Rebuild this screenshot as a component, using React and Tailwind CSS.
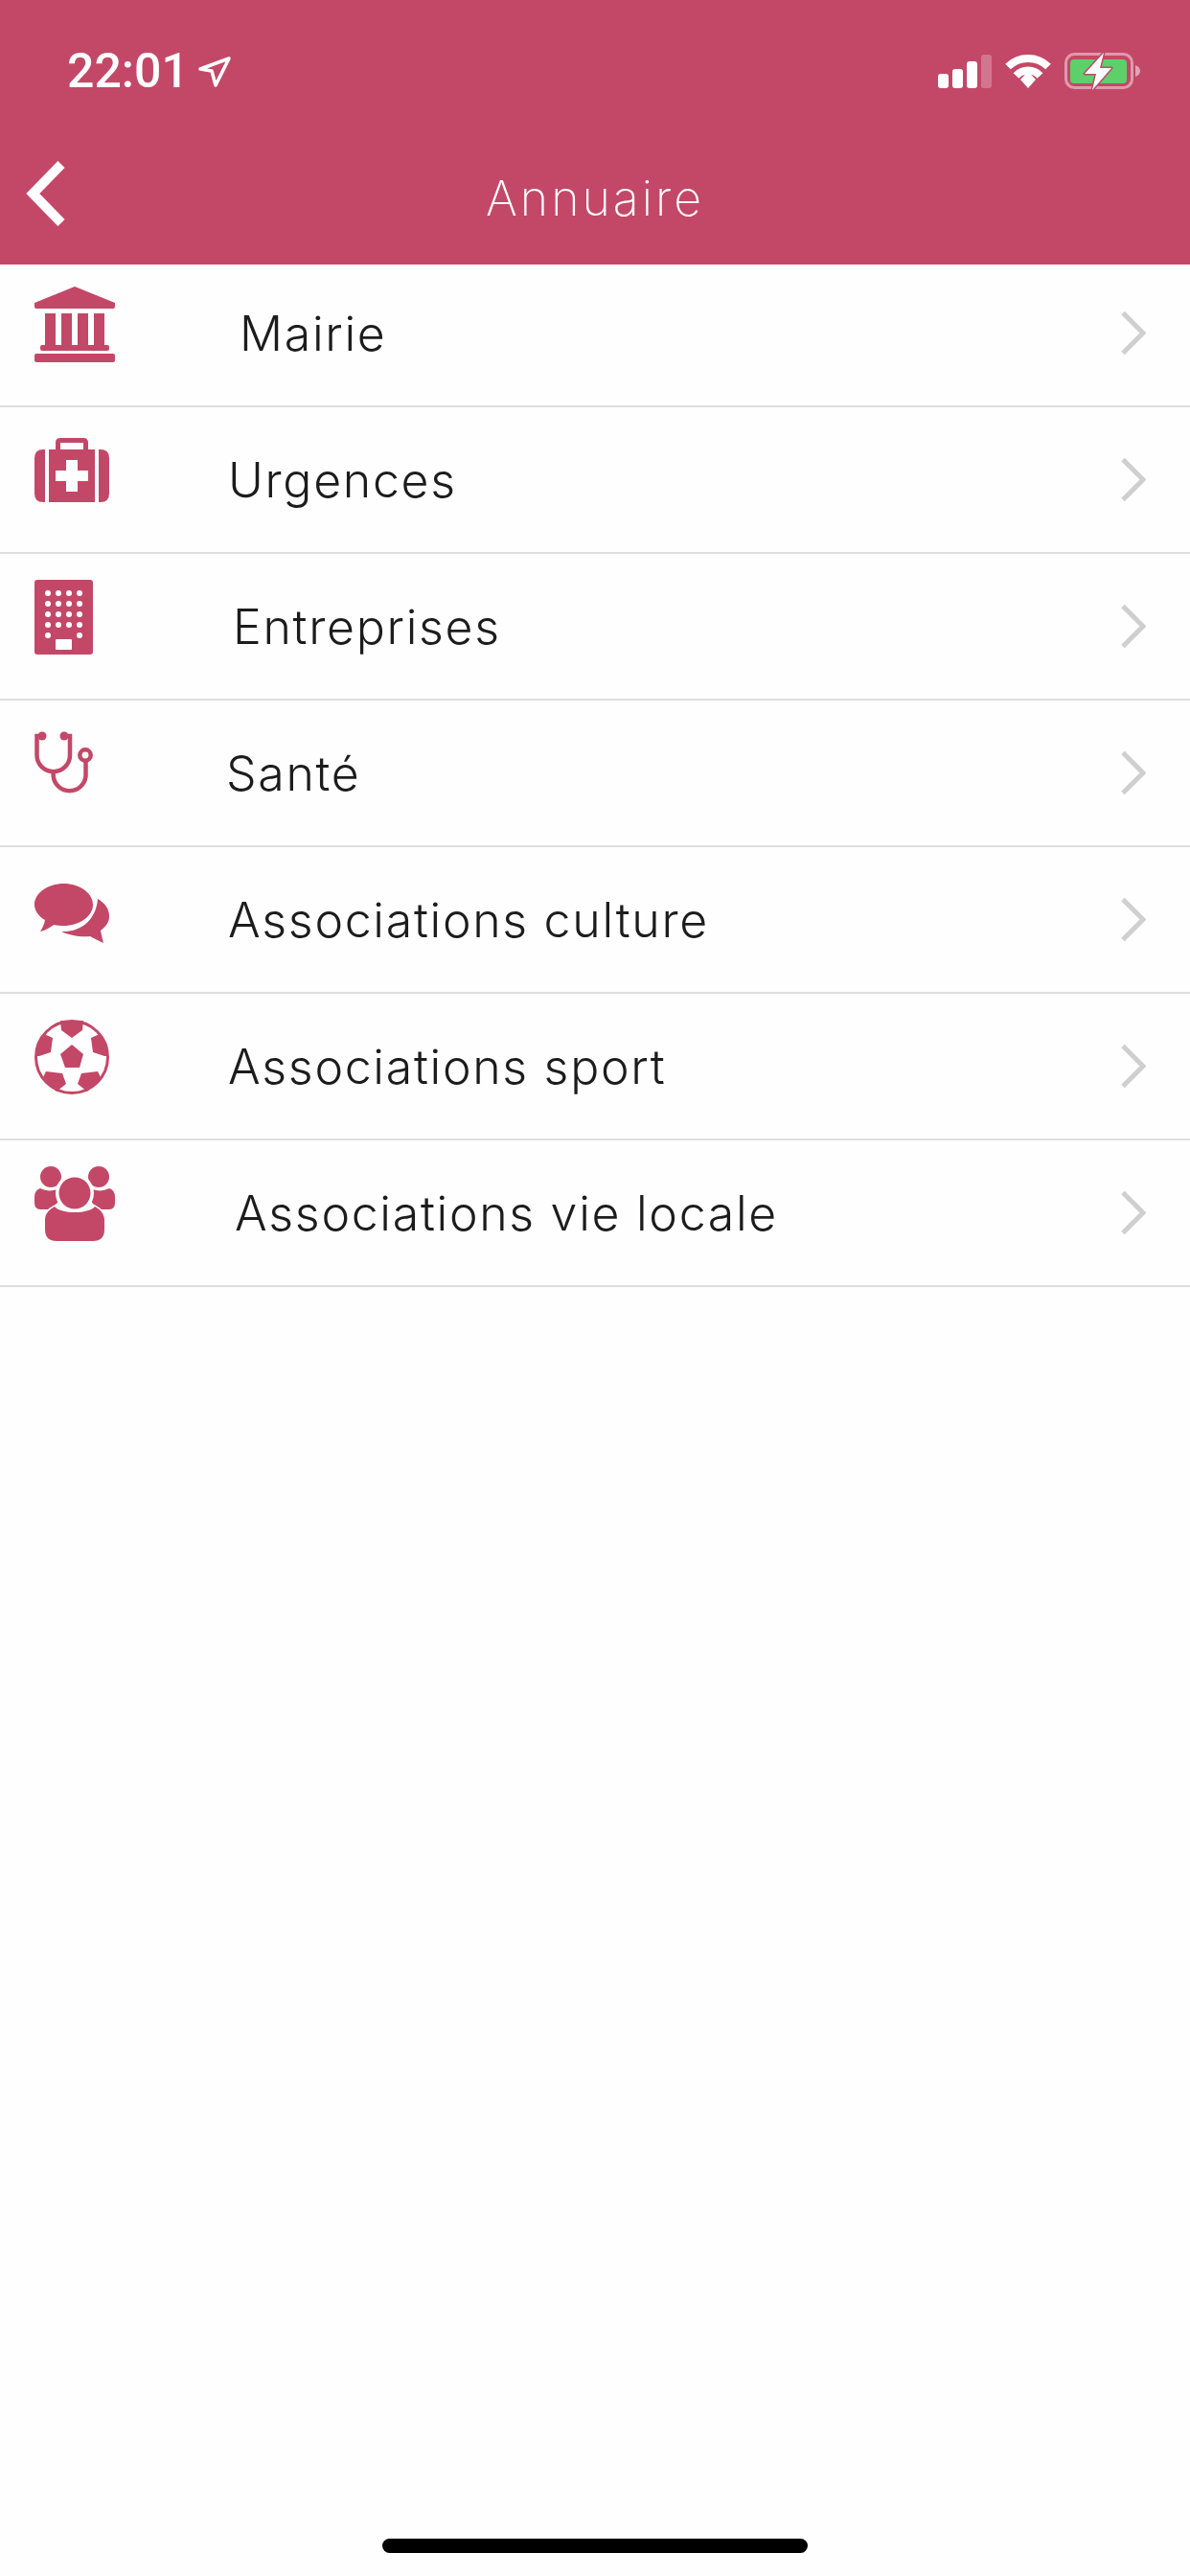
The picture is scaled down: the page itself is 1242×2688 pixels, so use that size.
import React from "react";

const rows = [
  { label: "Mairie", icon: <CityHallIcon />, rowCls: "h-[149px]", iconCls: "mt-[23px] h-[79px]", textCls: "ml-[130px] -mt-[3px]", arrowCls: "-mt-[5px]" },
  { label: "Urgences", icon: <KitIcon />, rowCls: "h-[153px]", iconCls: "mt-[32px] h-[68px]", textCls: "ml-[118px] mt-[2px]", arrowCls: "" },
  { label: "Entreprises", icon: <BuildingIcon />, rowCls: "h-[153px]", iconCls: "mt-[27px] h-[78px]", textCls: "ml-[123px] mt-[2px]", arrowCls: "" },
  { label: "Santé", icon: <StethoscopeIcon />, rowCls: "h-[153px]", iconCls: "mt-[32px] h-[67px]", textCls: "ml-[116px] mt-[2px]", arrowCls: "" },
  { label: "Associations culture", icon: <ChatIcon />, rowCls: "h-[153px]", iconCls: "mt-[38px] h-[62px]", textCls: "ml-[118px] mt-[2px]", arrowCls: "" },
  { label: "Associations sport", icon: <BallIcon />, rowCls: "h-[153px]", iconCls: "mt-[27px] h-[78px]", textCls: "ml-[118px] mt-[2px]", arrowCls: "" },
  { label: "Associations vie locale", icon: <PeopleIcon />, rowCls: "h-[153px]", iconCls: "mt-[27px] h-[78px]", textCls: "ml-[125px] mt-[2px]", arrowCls: "" },
];

export default function App() {
  return (
    <div className="flex flex-col min-h-[2688px] bg-[#fefefe] font-['Inter',sans-serif]">
      <header className="h-[276px] bg-[#c34868] text-white shrink-0">
        {/* Status bar */}
        <div className="flex items-start h-[135px] pl-[70px] pt-[44px]">
          <span className="text-[50px] leading-[60px] font-medium font-['Roboto',sans-serif]">22:01</span>
          <ArrowIcon />
          <div className="flex items-start ml-auto mr-[51px] mt-[11px]">
            <SignalIcon />
            <WifiIcon />
            <BatteryIcon />
          </div>
        </div>
        {/* Title */}
        <div className="relative flex justify-center items-center h-[141px] pt-[3px]">
          <BackIcon />
          <h1 className="text-[50px] font-extralight tracking-[3px]">Annuaire</h1>
        </div>
      </header>

      <ul>
        {rows.map((row) => (
          <li key={row.label} className={`flex ${row.rowCls} pl-9 pr-[46px] border-b-2 border-[#dedede]`}>
            <div className={`w-[84px] shrink-0 ${row.iconCls}`}>{row.icon}</div>
            <span className={`${row.textCls} self-center text-[50px] font-light text-[#1c1c1c] tracking-[1.7px]`}>
              {row.label}
            </span>
            <svg viewBox="0 0 26 45" className={`ml-auto self-center w-[26px] h-[45px] ${row.arrowCls}`} fill="none" stroke="#cfcfcf" strokeWidth="5">
              <polyline points="2,1.5 23,22.5 2,43.5" />
            </svg>
          </li>
        ))}
      </ul>

      <div className="mt-auto mb-[24px] mx-auto w-[444px] h-[15px] rounded-full bg-black" />
    </div>
  );
}

function ArrowIcon() {
  return (
    <svg viewBox="0 0 34 32" className="w-[34px] h-[32px] ml-[10px] mt-[15px]" fill="none" stroke="#fff" strokeWidth="3.5" strokeLinejoin="round">
      <path d="M2 13 L32 2 L18 30 L14 15 Z" />
    </svg>
  );
}

function SignalIcon() {
  return (
    <svg viewBox="0 0 56 36" className="w-[56px] h-[36px] mt-[2px]" fill="#fff">
      <rect x="0" y="20" width="11" height="15" rx="3" />
      <rect x="15" y="15" width="11" height="20" rx="3" />
      <rect x="30" y="7" width="11" height="28" rx="3" />
      <rect x="45" y="0" width="11" height="35" rx="3" opacity="0.25" />
    </svg>
  );
}

function WifiIcon() {
  return (
    <svg viewBox="0 0 48 36" className="w-[48px] h-[36px] ml-[14px] mt-[1px]" fill="none" stroke="#fff">
      <path d="M3 13.5 A30 30 0 0 1 45 13.5" strokeWidth="8" />
      <path d="M11.5 23 A17 17 0 0 1 36.5 23" strokeWidth="8" />
      <path d="M16 27 L24 18.5 L32 27 L24 36 Z" fill="#fff" stroke="none" />
    </svg>
  );
}

function BatteryIcon() {
  return (
    <svg viewBox="0 0 80 40" className="w-[80px] h-[40px] ml-[14px]">
      <rect x="1.5" y="1.5" width="69" height="35" rx="9" fill="none" stroke="#fff" strokeOpacity="0.45" strokeWidth="3" />
      <path d="M74 13 Q79 15 79 19 Q79 23 74 25 Z" fill="#fff" fillOpacity="0.5" />
      <rect x="6" y="7" width="59" height="25" rx="4" fill="#5dd06a" />
      <path d="M41 0 L21 22 L33 22 L29 39 L49 16 L37 16 Z" fill="#fff" stroke="#c34868" strokeWidth="3" strokeLinejoin="round" paintOrder="stroke" />
    </svg>
  );
}

function BackIcon() {
  return (
    <svg viewBox="0 0 41 68" className="absolute left-[27px] top-[33px] w-[41px] h-[68px]" fill="none" stroke="#fff" strokeWidth="10">
      <polyline points="37,3.5 7.3,34 37,64.5" />
    </svg>
  );
}

function CityHallIcon() {
  return (
    <svg viewBox="0 0 84 79" className="w-[84px] h-[79px]" fill="#c34868">
      <path d="M42 0 L84 17 V21 Q84 23 82 23 H2 Q0 23 0 21 V17 Z" />
      <path d="M11 28 H22 V62 H11 Z M28 28 H39 V62 H28 Z M45 28 H56 V62 H45 Z M62 28 H73 V62 H62 Z" />
      <rect x="6" y="61" width="72" height="6" rx="2" />
      <rect x="0" y="70" width="84" height="9" rx="2" />
    </svg>
  );
}

function KitIcon() {
  return (
    <svg viewBox="0 0 78 68" className="w-[78px] h-[68px]" fill="#c34868">
      <path d="M11 12 V67 H9 Q0 67 0 58 V21 Q0 12 9 12 Z" />
      <path d="M67 12 V67 H69 Q78 67 78 58 V21 Q78 12 69 12 Z" />
      <path fillRule="evenodd" d="M22 12 V5 Q22 0 27 0 H51 Q56 0 56 5 V12 H63 V67 H15 V12 Z M27 12 H51 V5 H27 Z M33 23 V34 H22 V45 H33 V56 H45 V45 H56 V34 H45 V23 Z" />
    </svg>
  );
}

function BuildingIcon() {
  const cols = [14, 25, 36, 47];
  const lines = [14, 25, 36, 47];
  return (
    <svg viewBox="0 0 61 78" className="w-[61px] h-[78px]">
      <rect width="61" height="78" rx="3" fill="#c34868" />
      {lines.map((y) => cols.map((x) => <circle key={`${x}-${y}`} cx={x} cy={y} r="3" fill="#fff" />))}
      <circle cx="14" cy="58" r="3" fill="#fff" />
      <circle cx="47" cy="58" r="3" fill="#fff" />
      <rect x="22" y="62" width="17" height="11" rx="1" fill="#fff" />
    </svg>
  );
}

function StethoscopeIcon() {
  return (
    <svg viewBox="0 0 61 67" className="w-[61px] h-[67px]" fill="none" stroke="#c34868" strokeWidth="4.5">
      <path d="M8 5 H2.5 V25 A17.2 17.2 0 0 0 37 25 V5 H31" />
      <path d="M19.7 42 V47 A17 17 0 0 0 53.5 47 V31" />
      <circle cx="53" cy="25" r="5.7" />
      <circle cx="8" cy="5" r="4.5" fill="#c34868" stroke="none" />
      <circle cx="31" cy="5" r="4.5" fill="#c34868" stroke="none" />
    </svg>
  );
}

function ChatIcon() {
  return (
    <svg viewBox="0 0 78 62" className="w-[78px] h-[62px]" fill="#c34868">
      <path d="M30.5 0 C47 0 61 10 61 22 C61 34 47 44 30.5 44 C27 44 24 43.6 20 43 C16 46 11 49 6 50 C8 47 10 43 11 38 C4 34 0 28 0 22 C0 10 14 0 30.5 0 Z" />
      <path d="M66 16 C73 20 78 26 78 34 C78 40 75 44 69 49 C70 54 71 58 72 62 C67 60 62 57 58 55 C48 56 36 54 28 50 C46 51 64 40 66 16 Z" />
    </svg>
  );
}

function BallIcon() {
  return (
    <svg viewBox="0 0 78 78" className="w-[78px] h-[78px]" fill="#c34868">
      <circle cx="39" cy="39" r="37.5" fill="#fff" stroke="#c34868" strokeWidth="3" />
      <polygon points="39,26 51,36 47,50 32,50 27,36" />
      <polygon points="27,1 51,1 50,11 39,19 28,11" />
      <polygon points="19,19 17,34 5,38 1,38 2,26 10,15" />
      <polygon points="59,19 61,34 73,38 77,38 76,26 68,15" />
      <polygon points="12,54 29,56 33,67 23,75 8,62" />
      <polygon points="66,54 49,56 45,67 55,75 70,62" />
    </svg>
  );
}

function PeopleIcon() {
  return (
    <svg viewBox="0 0 84 78" className="w-[84px] h-[78px]" fill="#c34868">
      <circle cx="17" cy="11" r="11" />
      <circle cx="67" cy="11" r="11" />
      <path d="M6 23 C12 26 18 26 24 24 L24 38 L16 45 H6 Q0 45 0 38 V32 Q0 25 6 23 Z" />
      <path d="M78 23 C72 26 66 26 60 24 L60 38 L68 45 H78 Q84 45 84 38 V32 Q84 25 78 23 Z" />
      <circle cx="42" cy="28" r="20" fill="#fefefe" />
      <circle cx="42" cy="28" r="16.5" />
      <path d="M21 42 C28 50 56 50 63 42 C69 45 73 50 73 56 V66 Q73 78 61 78 H23 Q11 78 11 66 V56 C11 50 15 45 21 42 Z" stroke="#fefefe" strokeWidth="3" paintOrder="stroke" />
    </svg>
  );
}
